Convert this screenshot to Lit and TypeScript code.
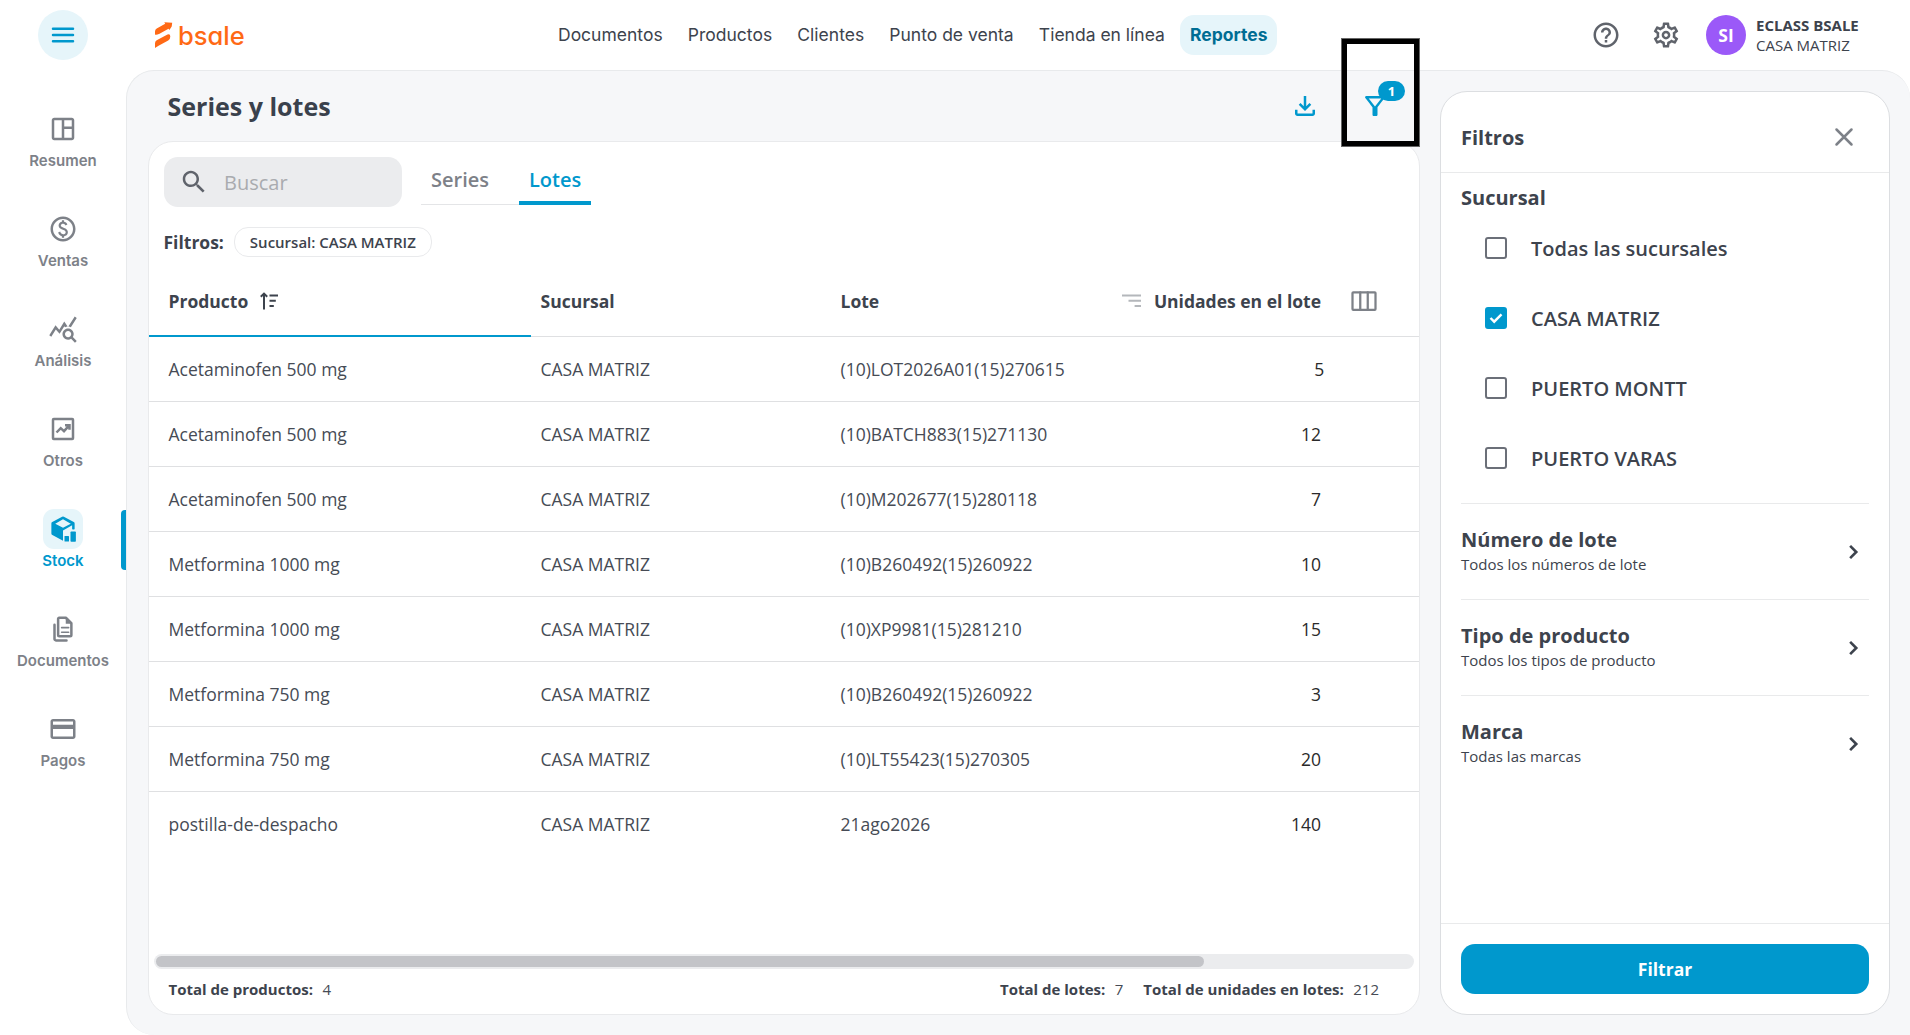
import { LitElement, html, css, svg, nothing, SVGTemplateResult } from "lit";
import { customElement, property, state } from "lit/decorators.js";
import { classMap } from "lit/directives/class-map.js";

const line = (d: string, w = 2) =>
  svg`<path d=${d} fill="none" stroke="currentColor" stroke-width=${w} stroke-linecap="round" stroke-linejoin="round"/>`;
const fill = (d: string) => svg`<path d=${d} fill="currentColor"/>`;

const ICONS: Record<string, SVGTemplateResult> = {
  menu: line("M4 7h16M4 12h16M4 17h16", 2),
  dashboard: fill(
    "M19 3H5c-1.100 0-2 .9-2 2v14c0 1.100.9 2 2 2h14c1.100 0 2-.9 2-2V5c0-1.100-.9-2-2-2zM5 19V5h6v14H5zm14 0h-6v-7h6v7zm0-9h-6V5h6v5z"
  ),
  paid: fill(
    "M12,2C6.480,2,2,6.480,2,12s4.480,10,10,10s10-4.480,10-10S17.520,2,12,2z M12,20c-4.410,0-8-3.590-8-8c0-4.410,3.590-8,8-8s8,3.590,8,8C20,16.410,16.410,20,12,20z M12.890,11.100c-1.780-0.590-2.640-0.960-2.640-1.900c0-1.020,1.110-1.390,1.810-1.390c1.310,0,1.790,0.990,1.900,1.340l1.580-0.670c-0.150-0.440-0.820-1.910-2.660-2.230V5h-1.750v1.260c-2.600,0.560-2.620,2.850-2.620,2.960c0,2.270,2.250,2.910,3.350,3.310c1.580,0.560,2.280,1.070,2.280,2.030c0,1.130-1.050,1.610-1.980,1.610c-1.820,0-2.340-1.870-2.400-2.090L8.100,14.750c0.630,2.190,2.280,2.780,3.020,2.960V19h1.750v-1.240c0.520-0.090,3.020-0.590,3.020-3.220C15.900,13.150,15.290,11.930,12.890,11.100z"
  ),
  stats: fill(
    "M19.880,18.470c0.440-0.700,0.700-1.510,0.700-2.390c0-2.490-2.010-4.500-4.500-4.500s-4.500,2.010-4.500,4.500s2.010,4.500,4.490,4.500c0.880,0,1.700-0.260,2.390-0.700L21.580,23L23,21.580L19.880,18.470z M16.080,18.580c-1.380,0-2.500-1.120-2.500-2.500c0-1.380,1.120-2.500,2.500-2.500s2.500,1.120,2.500,2.500C18.580,17.460,17.460,18.580,16.080,18.580z M15.720,10.080c-0.740,0.020-1.450,0.180-2.100,0.450l-0.550-0.830l-3.800,6.180l-3.010-3.520l-3.630,5.810L1,17l5-8l3,3.500L13,6L15.720,10.080z M18.310,10.580c-0.640-0.280-1.330-0.450-2.050-0.490L21.380,2L23,3.180L18.310,10.580z"
  ),
  trend: svg`${line("M4.600 4h14.800a.6.6 0 0 1 .6.6v14.800a.6.6 0 0 1-.6.6H4.600a.6.6 0 0 1-.6-.6V4.600a.6.6 0 0 1 .6-.6z")}
    <path d="M6.800 14.800l3.400-3.500 2.600 2.400 3.500-3.800M13.600 8.900h3.600v3.600" fill="none" stroke="currentColor" stroke-width="2"/>`,
  stock: svg`<path fill-rule="evenodd" fill="currentColor" d="M11.300 2.100a1.500 1.500 0 0 1 1.400 0l7.900 4.300a1.300 1.300 0 0 1 .7 1.200v4.200a.5.5 0 0 1-.5.5h-1a.5.5 0 0 1-.5-.5V9l-7.300 4.100v8.300l-8.500-4.700a1.300 1.300 0 0 1-.8-1.200V7.600a1.300 1.300 0 0 1 .7-1.200zM12 4.200L5.800 7.700 12 11l6.200-3.300z"/>
    <rect x="13.200" y="17.600" width="3.600" height="4.300" rx=".4" fill="currentColor"/>
    <rect x="18" y="13.900" width="4.300" height="8.200" rx=".6" fill="currentColor"/>`,
  docs: svg`${line("M8.900 3h5.400l4.400 4.300v9.500a1 1 0 0 1-1 1H9.100a1 1 0 0 1-1-1V3.800a.8.8 0 0 1 .8-.8zM5.200 8.600V20a1.100 1.100 0 0 0 1.100 1.100h8.500")}
    ${fill("M14.200 2.600v5.200h5z")}${line("M10.900 10.900h5.600M10.900 14.600h5.600", 1.3)}`,
  card: fill(
    "M20 4H4c-1.110 0-1.990.89-1.990 2L2 18c0 1.110.89 2 2 2h16c1.110 0 2-.89 2-2V6c0-1.110-.89-2-2-2zm0 14H4v-6h16v6zm0-9.500H4V6h16v2.500z"
  ),
  help: fill(
    "M11 18h2v-2h-2v2zm1-16C6.480 2 2 6.480 2 12s4.480 10 10 10 10-4.480 10-10S17.520 2 12 2zm0 18c-4.410 0-8-3.590-8-8s3.590-8 8-8 8 3.590 8 8-3.590 8-8 8zm0-14c-2.210 0-4 1.790-4 4h2c0-1.100.9-2 2-2s2 .9 2 2c0 2-3 1.750-3 5h2c0-2.250 3-2.500 3-5 0-2.210-1.790-4-4-4z"
  ),
  gear: fill(
    "M19.430 12.980c.04-.32.07-.64.07-.98 0-.34-.03-.66-.07-.98l2.110-1.650c.19-.15.24-.42.12-.64l-2-3.460c-.09-.16-.26-.25-.44-.25-.06 0-.12.010-.17.030l-2.490 1c-.52-.4-1.080-.73-1.690-.98l-.38-2.650C14.460 2.180 14.250 2 14 2h-4c-.25 0-.46.18-.49.42l-.38 2.650c-.61.25-1.170.59-1.690.98l-2.490-1c-.06-.02-.12-.03-.18-.03-.17 0-.34.09-.43.25l-2 3.460c-.13.22-.07.49.12.64l2.110 1.650c-.04.32-.07.65-.07.98 0 .33.030.66.070.98l-2.110 1.650c-.19.15-.24.42-.12.64l2 3.460c.09.16.26.25.44.25.06 0 .12-.01.17-.03l2.490-1c.52.4 1.080.73 1.690.98l.38 2.650c.03.24.24.42.49.42h4c.25 0 .46-.18.49-.42l.38-2.650c.61-.25 1.170-.59 1.690-.98l2.490 1c.06.02.12.03.18.03.17 0 .34-.09.43-.25l2-3.460c.12-.22.070-.49-.12-.64l-2.110-1.650zm-1.980-1.710c.04.31.05.52.05.73 0 .21-.02.43-.05.73l-.14 1.130.89.7 1.080.84-.7 1.210-1.270-.51-1.040-.42-.9.68c-.43.32-.84.56-1.250.73l-1.060.43-.16 1.130-.2 1.350h-1.400l-.19-1.350-.16-1.130-1.060-.43c-.43-.18-.83-.41-1.230-.71l-.91-.7-1.060.43-1.270.51-.7-1.210 1.080-.84.89-.7-.14-1.130c-.03-.31-.05-.54-.05-.74s.02-.43.05-.73l.14-1.130-.89-.7-1.080-.84.7-1.210 1.270.51 1.040.42.9-.68c.43-.32.84-.56 1.250-.73l1.060-.43.16-1.130.2-1.350h1.390l.19 1.350.16 1.130 1.060.43c.43.18.83.41 1.230.71l.91.7 1.060-.43 1.270-.51.7 1.210-1.070.85-.89.7.14 1.130zM12 8.500c-1.930 0-3.500 1.570-3.500 3.500s1.570 3.500 3.500 3.500 3.500-1.570 3.500-3.500-1.570-3.500-3.500-3.500zm0 5c-.83 0-1.500-.67-1.500-1.500s.67-1.500 1.500-1.500 1.500.67 1.500 1.500-.67 1.500-1.500 1.500z"
  ),
  download: fill(
    "M18,15v3H6v-3H4v3c0,1.100,0.900,2,2,2h12c1.100,0,2-0.900,2-2v-3H18z M17,11l-1.410-1.410L13,12.170V4h-2v8.170L8.410,9.590L7,11l5,5L17,11z"
  ),
  funnel: fill(
    "M7,6h10l-5.010,6.300L7,6z M4.250,5.610C6.270,8.200,10,13,10,13v6c0,0.550,0.450,1,1,1h2c0.550,0,1-0.450,1-1v-6c0,0,3.720-4.800,5.740-7.390C20.250,4.950,19.780,4,18.950,4H5.040C4.210,4,3.740,4.950,4.250,5.610z"
  ),
  search: fill(
    "M15.500 14h-.79l-.28-.27C15.410 12.590 16 11.110 16 9.500 16 5.910 13.090 3 9.500 3S3 5.910 3 9.500 5.910 16 9.500 16c1.610 0 3.090-.59 4.230-1.570l.27.28v.79l5 4.990L20.490 19l-4.990-5zm-6 0C7.010 14 5 11.990 5 9.500S7.010 5 9.500 5 14 7.010 14 9.500 11.990 14 9.500 14z"
  ),
  columns: svg`${line("M3.400 5h17.200a.6.6 0 0 1 .6.6v12.800a.6.6 0 0 1-.6.6H3.400a.6.6 0 0 1-.6-.6V5.600a.6.6 0 0 1 .6-.6z", 1.8)}
    ${line("M9 5v14M15 5v14", 1.8)}`,
  close: line("M6 6l12 12M18 6L6 18", 2),
  chevron: svg`<path d="M8.900 7.100L13.800 12l-4.900 4.900" fill="none" stroke="currentColor" stroke-width="2.100"/>`,
};

@customElement("ui-icon")
export class UiIcon extends LitElement {
  static styles = css`
    :host { display: inline-flex; flex: none; }
    .glyph { display: block; }
  `;
  @property() name = "menu";
  @property({ type: Number }) size = 30;
  render() {
    return html`<svg class="glyph" width=${this.size} height=${this.size} viewBox="0 0 24 24" aria-hidden="true">
      ${ICONS[this.name] ?? nothing}
    </svg>`;
  }
}

@customElement("side-nav")
export class SideNav extends LitElement {
  static styles = css`
    :host {
      display: flex; flex-direction: column; align-items: center; width: 126px; flex: none;
      font-family: Inter, "Liberation Sans", sans-serif; color: #7d8188;
    }
    .toggle {
      width: 50px; height: 50px; margin: 10px 0 49px; border-radius: 50%; background: #e6f5fa; color: #0098cd;
      display: flex; align-items: center; justify-content: center;
    }
    .item {
      width: 126px; height: 60px; margin-bottom: 40px; box-sizing: border-box;
      display: flex; flex-direction: column; align-items: center; position: relative;
      font-size: 15px; font-weight: 600; line-height: 20px; gap: 2px;
    }
    .pic { width: 40px; height: 40px; border-radius: 11px; display: flex; align-items: center; justify-content: center; flex: none; }
    .active { color: #0098cd; }
    .active .pic { background: #e6f5fa; }
    .active::after {
      content: ""; position: absolute; right: 0; top: 1px; width: 5px; height: 60px;
      border-radius: 4px 0 0 4px; background: #0098cd;
    }
  `;
  @state() private active = "Stock";
  private items = [
    ["dashboard", "Resumen"], ["paid", "Ventas"], ["stats", "Análisis"], ["trend", "Otros"],
    ["stock", "Stock"], ["docs", "Documentos"], ["card", "Pagos"],
  ];
  render() {
    return html`
      <div class="toggle"><ui-icon name="menu"></ui-icon></div>
      ${this.items.map(
        ([icon, label]) => html`
          <div class=${classMap({ item: true, active: label === this.active })} @click=${() => (this.active = label)}>
            <div class="pic"><ui-icon name=${icon}></ui-icon></div>
            <span>${label}</span>
          </div>`
      )}
    `;
  }
}

@customElement("top-bar")
export class TopBar extends LitElement {
  static styles = css`
    :host {
      display: flex; align-items: center; height: 70px; flex: none; color: #3d434d;
      font-family: Inter, "Liberation Sans", sans-serif;
    }
    .brand { display: flex; align-items: center; gap: 5px; width: 394px; padding-left: 28px; color: #ff6915; }
    .word { font-size: 25.500px; font-weight: 500; line-height: 30px; padding-top: 2px; font-feature-settings: "cv11"; }
    .links { display: flex; gap: 5.200px; flex: 1; font-size: 17.500px; line-height: 40px; }
    .link { padding: 0 10px; border-radius: 14px; white-space: nowrap; }
    .on { background: #e6f5fa; color: #006d93; font-weight: 700; }
    .tools { display: flex; align-items: center; color: #5f636b; gap: 30px; }
    .user { display: flex; align-items: center; gap: 10px; width: 204px; margin-left: -5px; color: #3d434d;
      font-family: "Open Sans", sans-serif; font-size: 15px; line-height: 20px; }
    .avatar { width: 40px; height: 40px; border-radius: 50%; background: #9b59f8; color: #fff; font-size: 17.500px;
      font-weight: 700; display: flex; align-items: center; justify-content: center; }
    .name { font-weight: 700; }
  `;
  private links = ["Documentos", "Productos", "Clientes", "Punto de venta", "Tienda en línea", "Reportes"];
  render() {
    return html`
      <div class="brand">
        <svg width="19" height="28" viewBox="0 0 19 28" aria-hidden="true">
          <path fill="currentColor" d="M1 13.500V10.500Q1 8.600 2.700 7.600L11.200 2.800 10.300 1.200 18.200 1.800 17.700 5.500 15.400 9 14.500 7.700 5.500 12.700Q2 14.500 1 13.500zM1 27V22.300Q1 20.200 2.700 19.200L13.500 13.500Q16.300 12.600 16.300 15.500 16.300 18.400 14.200 19.600L5 24.500Q2 26 1 27z"/>
        </svg>
        <span class="word">bsale</span>
      </div>
      <nav class="links">
        ${this.links.map((l) => html`<span class=${classMap({ link: true, on: l === "Reportes" })}>${l}</span>`)}
      </nav>
      <div class="tools">
        <ui-icon name="help"></ui-icon>
        <ui-icon name="gear"></ui-icon>
        <div class="user">
          <div class="avatar">SI</div>
          <div><div class="name">ECLASS BSALE</div><div>CASA MATRIZ</div></div>
        </div>
      </div>
    `;
  }
}

interface Lot { product: string; branch: string; lot: string; units: number }

@customElement("lots-table")
export class LotsTable extends LitElement {
  static styles = css`
    :host { display: block; font-size: 17.500px; }
    .row {
      display: grid; grid-template-columns: 382px 300px 1fr 250px 98px; height: 64px; align-items: stretch;
      border-bottom: 1px solid #dfe0e2;
    }
    .row:last-child { border-bottom-color: transparent; }
    .head { height: 69px; font-weight: 700; color: #3d434d; }
    .cell { display: flex; align-items: center; padding: 0 9.500px; }
    .first { padding-left: 19.500px; }
    .head .cell, .head .tools { padding-bottom: 1px; }
    .sorted { box-shadow: inset 0 -1px #0098cd, 0 1px #0098cd; gap: 12px; }
    .num { justify-content: flex-end; padding: 0; color: #2a2a2a; white-space: nowrap; gap: 13px; }
    .head .num { color: #3d434d; }
    .tools { display: flex; align-items: center; padding-left: 28px; color: #7d8188; }
    .muted { color: #b4b7bb; }
  `;
  @property({ attribute: false }) lots: Lot[] = [];
  render() {
    return html`
      <div class="row head">
        <div class="cell first sorted">
          Producto
          <svg width="19" height="18" viewBox="0 0 19 18" fill="none" stroke="currentColor" stroke-width="2">
            <path d="M4 17.500V2M.8 4.800L4 1.600l3.200 3.200M9.500 3.500H18M9.500 8.800h6.300M9.500 14h4.300"/>
          </svg>
        </div>
        <div class="cell">Sucursal</div>
        <div class="cell">Lote</div>
        <div class="cell num">
          <svg class="muted" width="19" height="18" viewBox="0 0 19 18" fill="none" stroke="currentColor" stroke-width="2">
            <path d="M0 3.500h19M6.500 8.800H19M12.600 14H19"/>
          </svg>
          Unidades en el lote
        </div>
        <div class="tools"><ui-icon name="columns"></ui-icon></div>
      </div>
      ${this.lots.map(
        (l) => html`
          <div class="row">
            <div class="cell first">${l.product}</div>
            <div class="cell">${l.branch}</div>
            <div class="cell">${l.lot}</div>
            <div class="cell num">${l.units}</div>
            <div></div>
          </div>`
      )}
    `;
  }
}

@customElement("filter-panel")
export class FilterPanel extends LitElement {
  static styles = css`
    :host {
      display: flex; flex-direction: column; box-sizing: border-box; width: 450px; height: 924px; margin: 20px 20px 0 20px;
      border: 1px solid #dcdee1; border-radius: 27px; background: #fff; color: #3d434d; flex: none;
    }
    .head {
      display: flex; align-items: center; justify-content: space-between; height: 81px; padding: 10px 30px 0 20px;
      box-sizing: border-box; border-bottom: 1px solid #e9eaeb; font-size: 20px; font-weight: 700;
    }
    .close { color: #7d8188; }
    .body { flex: 1; padding: 0 20px; }
    .group { font-weight: 700; font-size: 20px; line-height: 30px; padding-top: 10px; height: 40px; box-sizing: border-box; }
    .option { display: flex; align-items: center; height: 70px; gap: 24px; padding-left: 24px; font-size: 20px; font-weight: 600; }
    .box {
      width: 22px; height: 22px; box-sizing: border-box; border: 2.500px solid #6b6f78; border-radius: 3px;
      display: flex; align-items: center; justify-content: center;
    }
    .checked { background: #0098cd; border-color: #0098cd; }
    .section {
      display: flex; align-items: center; justify-content: space-between; height: 95px; border-top: 1px solid #e9eaeb;
    }
    .title { font-size: 20px; font-weight: 700; line-height: 26px; }
    .sub { font-size: 15px; line-height: 23px; }
    .options { padding-bottom: 10px; }
    .foot { border-top: 1px solid #e9eaeb; padding: 20px 20px; }
    .button {
      height: 50px; line-height: 50px; border-radius: 14px; background: #0098cd; color: #fff; text-align: center;
      font-size: 17.500px; font-weight: 700;
    }
  `;
  @state() private checked = new Set(["CASA MATRIZ"]);
  private options = ["Todas las sucursales", "CASA MATRIZ", "PUERTO MONTT", "PUERTO VARAS"];
  private sections = [
    ["Número de lote", "Todos los números de lote"],
    ["Tipo de producto", "Todos los tipos de producto"],
    ["Marca", "Todas las marcas"],
  ];
  private toggle(name: string) {
    const next = new Set(this.checked);
    next.has(name) ? next.delete(name) : next.add(name);
    this.checked = next;
  }
  render() {
    return html`
      <div class="head"><span>Filtros</span><ui-icon class="close" name="close"></ui-icon></div>
      <div class="body">
        <div class="group">Sucursal</div>
        <div class="options">
          ${this.options.map((o) => {
            const on = this.checked.has(o);
            return html`<div class="option" @click=${() => this.toggle(o)}>
              <span class=${classMap({ box: true, checked: on })}>
                ${on
                  ? html`<svg width="14" height="12" viewBox="0 0 14 12">
                      <path d="M1.500 6l3.700 3.700 7.300-7.300" fill="none" stroke="#fff" stroke-width="2.400" />
                    </svg>`
                  : nothing}
              </span>
              <span>${o}</span>
            </div>`;
          })}
        </div>
        ${this.sections.map(
          ([t, s]) => html`<div class="section">
            <div><div class="title">${t}</div><div class="sub">${s}</div></div>
            <ui-icon name="chevron"></ui-icon>
          </div>`
        )}
      </div>
      <div class="foot"><div class="button">Filtrar</div></div>
    `;
  }
}

@customElement("app-root")
export class AppRoot extends LitElement {
  static styles = css`
    :host {
      display: flex; height: 1035px; overflow: hidden; background: #fff; color: #464b55;
      font-family: "Open Sans", sans-serif;
    }
    .content { flex: 1; min-width: 0; display: flex; flex-direction: column; }
    .shell {
      flex: 1; display: flex; box-sizing: border-box; background: #f6f7f9; border: 1px solid #e8eaec;
      border-right: 0; border-bottom: 0; border-radius: 28px 28px 0 28px;
    }
    .main { flex: 1; min-width: 0; padding-left: 21px; }
    .titlebar { display: flex; align-items: center; height: 70px; padding-left: 19.500px; color: #0098cd; }
    .title { flex: 1; margin: 0; color: #3a414c; font-size: 25px; font-weight: 700; line-height: 34px; }
    .action { display: flex; margin-right: 40px; position: relative; }
    .action:last-child { margin-right: 30px; }
    .badge {
      position: absolute; left: 18px; top: -10px; width: 27px; height: 20px; border-radius: 10px; background: #0098cd;
      color: #fff; font-size: 13px; font-weight: 700; line-height: 20px; text-align: center;
    }
    .frame {
      position: absolute; left: -18px; top: -52px; width: 67px; height: 97px; border: 5px solid #000;
      outline: 1px solid #666;
    }
    .card {
      display: flex; flex-direction: column; height: 874px; box-sizing: border-box; background: #fff;
      border: 1px solid #e9eaec; border-radius: 25px;
    }
    .bar { display: flex; align-items: flex-start; padding: 15px 15px 0; height: 70px; box-sizing: border-box; }
    .search {
      display: flex; align-items: center; gap: 15px; width: 238px; height: 50px; padding-left: 15px; box-sizing: border-box;
      border-radius: 14px; background: #ebecee; font-size: 20px; color: #a9abaf;
    }
    .search-icon { color: #5f636b; }
    .tabs { display: flex; margin-left: 19px; font-size: 20px; font-weight: 600; line-height: 46px; color: #7d8188; }
    .tab { height: 47px; padding: 0 10px; border-bottom: 1px solid #e4e5e7; width: 78px; }
    .selected {
      width: 52px; color: #0098cd; height: 44px; border-bottom: 0; border-radius: 0;
      background: linear-gradient(#0098cd, #0098cd) bottom / 100% 4px no-repeat; padding-bottom: 4px;
    }
    .filters { display: flex; align-items: center; gap: 10px; padding: 15px 14.500px 0; height: 30px; font-size: 17.500px; font-weight: 700; color: #3d434d; }
    .chip { height: 28px; line-height: 28px; padding: 0 15px; border: 1px solid #e9eaec; border-radius: 14px; font-size: 15px; font-weight: 600; }
    .grid { flex: 1; padding-top: 10px; }
    .track { height: 11px; margin: 0 5px; padding: 2px; border-radius: 8px; background: #ebecee; }
    .thumb { height: 11px; border-radius: 6px; background: #c3c4c8; }
    .totals { display: flex; align-items: center; box-sizing: border-box; height: 45px; padding: 0 40px 6px 19.500px; font-size: 15px; }
    .strong { font-weight: 700; color: #3d434d; margin-right: 9.500px; }
    .gap { flex: 1; }
    .next { margin-left: 20px; }
  `;
  private lots: Lot[] = [
    { product: "Acetaminofen 500 mg", branch: "CASA MATRIZ", lot: "(10)LOT2026A01(15)270615", units: 5 },
    { product: "Acetaminofen 500 mg", branch: "CASA MATRIZ", lot: "(10)BATCH883(15)271130", units: 12 },
    { product: "Acetaminofen 500 mg", branch: "CASA MATRIZ", lot: "(10)M202677(15)280118", units: 7 },
    { product: "Metformina 1000 mg", branch: "CASA MATRIZ", lot: "(10)B260492(15)260922", units: 10 },
    { product: "Metformina 1000 mg", branch: "CASA MATRIZ", lot: "(10)XP9981(15)281210", units: 15 },
    { product: "Metformina 750 mg", branch: "CASA MATRIZ", lot: "(10)B260492(15)260922", units: 3 },
    { product: "Metformina 750 mg", branch: "CASA MATRIZ", lot: "(10)LT55423(15)270305", units: 20 },
    { product: "postilla-de-despacho", branch: "CASA MATRIZ", lot: "21ago2026", units: 140 },
  ];
  render() {
    return html`
      <side-nav></side-nav>
      <div class="content">
        <top-bar></top-bar>
        <div class="shell">
          <div class="main">
            <div class="titlebar">
              <h1 class="title">Series y lotes</h1>
              <div class="action"><ui-icon name="download"></ui-icon></div>
              <div class="action">
                <ui-icon name="funnel"></ui-icon>
                <span class="badge">1</span>
                <span class="frame"></span>
              </div>
            </div>
            <div class="card">
              <div class="bar">
                <div class="search"><ui-icon class="search-icon" name="search"></ui-icon><span>Buscar</span></div>
                <div class="tabs"><div class="tab">Series</div><div class="tab selected">Lotes</div></div>
              </div>
              <div class="filters"><span>Filtros:</span><span class="chip">Sucursal: CASA MATRIZ</span></div>
              <div class="grid"><lots-table .lots=${this.lots}></lots-table></div>
              <div class="track"><div class="thumb" style="width:83.45%"></div></div>
              <div class="totals">
                <span class="strong">Total de productos:</span><span>4</span>
                <span class="gap"></span>
                <span class="strong">Total de lotes:</span><span>7</span>
                <span class="strong next">Total de unidades en lotes:</span><span>212</span>
              </div>
            </div>
          </div>
          <filter-panel></filter-panel>
        </div>
      </div>
    `;
  }
}
